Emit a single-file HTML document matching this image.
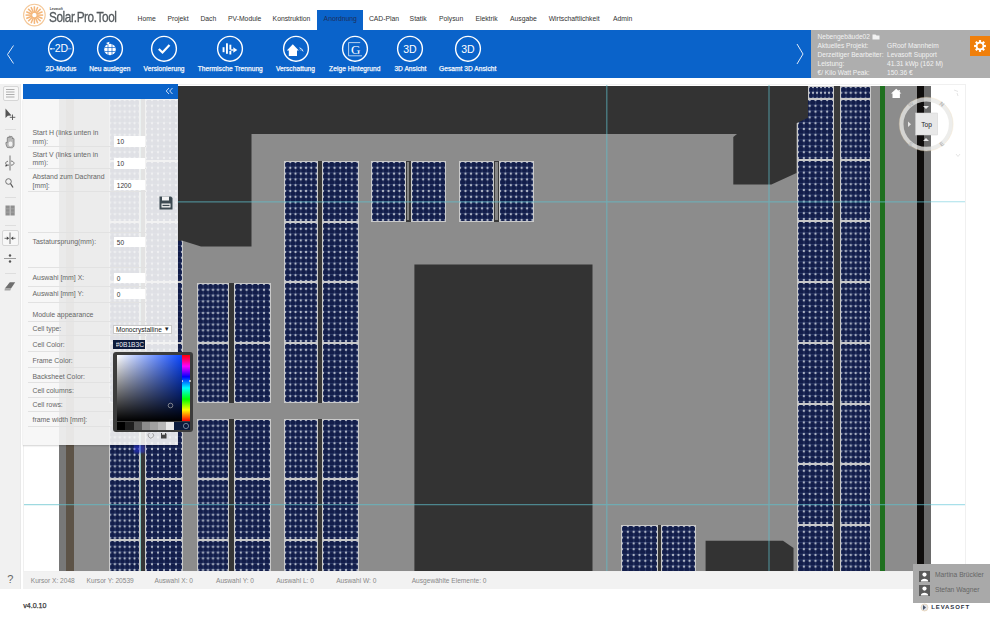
<!DOCTYPE html><html><head><meta charset="utf-8"><style>
*{margin:0;padding:0;box-sizing:border-box}
html,body{width:990px;height:619px;overflow:hidden;background:#fff;font-family:"Liberation Sans",sans-serif;position:relative}
.a{position:absolute}
.t{position:absolute;white-space:nowrap;line-height:1}
.mod{position:absolute;background-color:#121d4a;
 background-image:radial-gradient(circle at center,#bcc2cf 0,#bcc2cf 0.6px,rgba(180,186,200,0.55) 1px,rgba(0,0,0,0) 1.6px),
 linear-gradient(90deg,rgba(90,110,160,0.3) 0.6px,transparent 0.6px),
 linear-gradient(0deg,rgba(90,110,160,0.3) 0.6px,transparent 0.6px);
 background-size:5.4px 5.8px;background-position:-2.2px -2.4px,-0.3px 0,0 -0.3px;
 border:1px solid #c9c9c9;}
.fmod{position:absolute;background-color:#dfe1e6;
 background-image:radial-gradient(circle at center,#f6f6f8 0,#f6f6f8 0.6px,rgba(0,0,0,0) 1.3px);
 background-size:5.4px 5.8px;background-position:-2.2px -2.4px;border:1px solid #eeeeee}
.menu{font-size:6.8px;color:#333;top:16px}
.tbl{font-size:6.6px;color:#f4f7fc;top:65.5px;letter-spacing:0.05px;-webkit-text-stroke:0.25px #f4f7fc}
.lbl{font-size:6.9px;color:#666}
.inp{position:absolute;background:#fff;font-size:6.5px;color:#333;padding-left:3px;padding-top:1px;line-height:10px;height:10.3px;width:31.3px}
.sep{position:absolute;left:28px;width:118px;height:1px;background:#e2e2e2}
.st{font-size:6.6px;color:#888;top:578px}
</style></head><body>
<svg class="a" style="left:0;top:0" width="60" height="30"><circle cx="34.4" cy="15.1" r="10.8" fill="none" stroke="#f5c99a" stroke-width="1.1"/><g stroke="#f4b67a" stroke-width="1.5"><line x1="36.60" y1="15.10" x2="43.20" y2="15.10"/><line x1="36.43" y1="15.94" x2="42.53" y2="18.47"/><line x1="35.96" y1="16.66" x2="40.62" y2="21.32"/><line x1="35.24" y1="17.13" x2="37.77" y2="23.23"/><line x1="34.40" y1="17.30" x2="34.40" y2="23.90"/><line x1="33.56" y1="17.13" x2="31.03" y2="23.23"/><line x1="32.84" y1="16.66" x2="28.18" y2="21.32"/><line x1="32.37" y1="15.94" x2="26.27" y2="18.47"/><line x1="32.20" y1="15.10" x2="25.60" y2="15.10"/><line x1="32.37" y1="14.26" x2="26.27" y2="11.73"/><line x1="32.84" y1="13.54" x2="28.18" y2="8.88"/><line x1="33.56" y1="13.07" x2="31.03" y2="6.97"/><line x1="34.40" y1="12.90" x2="34.40" y2="6.30"/><line x1="35.24" y1="13.07" x2="37.77" y2="6.97"/><line x1="35.96" y1="13.54" x2="40.62" y2="8.88"/><line x1="36.43" y1="14.26" x2="42.53" y2="11.73"/></g><circle cx="34.4" cy="15.1" r="1.6" fill="#fff"/></svg>
<div class="t" style="left:49.7px;top:7.6px;font-size:3.2px;color:#444;font-weight:bold">Levasoft</div>
<div class="t" style="left:48.6px;top:9.6px;font-size:14.8px;color:#555a5e;transform:scaleX(0.8);transform-origin:0 0;letter-spacing:-0.55px;-webkit-text-stroke:0.3px #555a5e">Solar.Pro.Tool</div>
<div class="a" style="left:317px;top:10px;width:45.5px;height:20px;background:#0a63ca"></div>
<div class="t menu" style="left:137.6px;color:#333">Home</div>
<div class="t menu" style="left:167.4px;color:#333">Projekt</div>
<div class="t menu" style="left:200.4px;color:#333">Dach</div>
<div class="t menu" style="left:228px;color:#333">PV-Module</div>
<div class="t menu" style="left:272.6px;color:#333">Konstruktion</div>
<div class="t menu" style="left:323.6px;color:#1d2f5a">Anordnung</div>
<div class="t menu" style="left:368.9px;color:#333">CAD-Plan</div>
<div class="t menu" style="left:409.6px;color:#333">Statik</div>
<div class="t menu" style="left:439px;color:#333">Polysun</div>
<div class="t menu" style="left:475.4px;color:#333">Elektrik</div>
<div class="t menu" style="left:510px;color:#333">Ausgabe</div>
<div class="t menu" style="left:548.7px;color:#333">Wirtschaftlichkeit</div>
<div class="t menu" style="left:613px;color:#333">Admin</div>
<div class="a" style="left:0;top:30px;width:811px;height:47.6px;background:#0a63ca"></div>
<svg class="a" style="left:0;top:30px" width="20" height="48"><polyline points="13.5,15.5 7.5,24.5 13.5,33.5" fill="none" stroke="#dfe9f7" stroke-width="1"/></svg>
<svg class="a" style="left:790px;top:30px" width="20" height="48"><polyline points="7,14 13,24 7,34" fill="none" stroke="#dfe9f7" stroke-width="1"/></svg>
<svg class="a" style="left:45.9px;top:34px" width="30" height="30"><circle cx="15" cy="14.8" r="12.4" fill="none" stroke="#fff" stroke-width="1.4"/><text x="15.5" y="18.3" font-size="10.5" text-anchor="middle" fill="#fff" font-family="Liberation Sans">2D</text><line x1="4.5" y1="14.8" x2="9" y2="14.8" stroke="#fff" stroke-width="0.8"/><circle cx="5" cy="14.8" r="0.9" fill="#fff"/><line x1="22" y1="14.8" x2="25.5" y2="14.8" stroke="#fff" stroke-width="0.6"/></svg>
<div class="t tbl" style="left:60.9px;transform:translateX(-50%)">2D-Modus</div>
<svg class="a" style="left:94.8px;top:34px" width="30" height="30"><circle cx="15" cy="14.8" r="12.4" fill="none" stroke="#fff" stroke-width="1.4"/><circle cx="15" cy="15.5" r="5.8" fill="#fff"/><g stroke="#0a63ca" stroke-width="0.7"><line x1="13" y1="10" x2="13" y2="21"/><line x1="17" y1="10" x2="17" y2="21"/><line x1="9.5" y1="13.5" x2="20.5" y2="13.5"/><line x1="9.5" y1="17.5" x2="20.5" y2="17.5"/></g><path d="M11 9 l3.5 -1.3 l-0.8 3z" fill="#fff"/></svg>
<div class="t tbl" style="left:109.8px;transform:translateX(-50%)">Neu auslegen</div>
<svg class="a" style="left:149.1px;top:34px" width="30" height="30"><circle cx="15" cy="14.8" r="12.4" fill="none" stroke="#fff" stroke-width="1.4"/><polyline points="9.8,15 13.5,18.5 20.5,11" fill="none" stroke="#fff" stroke-width="2.2"/></svg>
<div class="t tbl" style="left:164.1px;transform:translateX(-50%)">Versionierung</div>
<svg class="a" style="left:215.3px;top:34px" width="30" height="30"><circle cx="15" cy="14.8" r="12.4" fill="none" stroke="#fff" stroke-width="1.4"/><g fill="#fff"><rect x="7.6" y="13.2" width="1.9" height="5"/><rect x="11" y="9.3" width="1.9" height="10.5"/><rect x="14.4" y="10.7" width="1.9" height="5"/><rect x="14.4" y="17" width="1.9" height="3.5"/><path d="M18.3 13.2 l4 2.8 l-4 2.8z"/><rect x="15.5" y="15.3" width="3" height="1.4"/></g></svg>
<div class="t tbl" style="left:230.3px;transform:translateX(-50%)">Thermische Trennung</div>
<svg class="a" style="left:280.5px;top:34px" width="30" height="30"><circle cx="15" cy="14.8" r="12.4" fill="none" stroke="#fff" stroke-width="1.4"/><path d="M11.8 10.3 L5.8 16.6 L7.8 16.6 L7.8 22 L16 22 L16 16.6 L17.8 16.6 Z" fill="#fff"/><path d="M18.5 13.8 q2.6 0.6 3.6 3.6" stroke="#fff" stroke-width="0.9" fill="none"/><path d="M19 15.5 l1.2 1.2" stroke="#fff" stroke-width="0.6"/></svg>
<div class="t tbl" style="left:295.5px;transform:translateX(-50%)">Verschattung</div>
<svg class="a" style="left:339.8px;top:34px" width="30" height="30"><circle cx="15" cy="14.8" r="12.4" fill="none" stroke="#fff" stroke-width="1.4"/><path d="M8.6 8.6 H20.2 M8.6 8.6 V21.8 H22" fill="none" stroke="#fff" stroke-width="0.7"/><text x="15.6" y="20.3" font-size="13" text-anchor="middle" fill="#fff" font-family="Liberation Serif">G</text></svg>
<div class="t tbl" style="left:354.8px;transform:translateX(-50%)">Zeige Hintegrund</div>
<svg class="a" style="left:395.4px;top:34px" width="30" height="30"><circle cx="15" cy="14.8" r="12.4" fill="none" stroke="#fff" stroke-width="1.4"/><text x="15" y="18.6" font-size="10.5" text-anchor="middle" fill="#fff" font-family="Liberation Sans">3D</text></svg>
<div class="t tbl" style="left:410.4px;transform:translateX(-50%)">3D Ansicht</div>
<svg class="a" style="left:452.7px;top:34px" width="30" height="30"><circle cx="15" cy="14.8" r="12.4" fill="none" stroke="#fff" stroke-width="1.4"/><text x="15" y="18.6" font-size="10.5" text-anchor="middle" fill="#fff" font-family="Liberation Sans">3D</text></svg>
<div class="t tbl" style="left:467.7px;transform:translateX(-50%)">Gesamt 3D Ansicht</div>
<div class="a" style="left:811px;top:30.3px;width:179px;height:47.5px;background:#aeaeae"></div>
<div class="a" style="left:970px;top:36px;width:20px;height:20px;background:#f07f0a"></div>
<svg class="a" style="left:970px;top:35.7px" width="20" height="20"><g transform="translate(10,10)" fill="#fff"><rect x="-1.1" y="-5.9" width="2.2" height="2.6" transform="rotate(0)"/><rect x="-1.1" y="-5.9" width="2.2" height="2.6" transform="rotate(45)"/><rect x="-1.1" y="-5.9" width="2.2" height="2.6" transform="rotate(90)"/><rect x="-1.1" y="-5.9" width="2.2" height="2.6" transform="rotate(135)"/><rect x="-1.1" y="-5.9" width="2.2" height="2.6" transform="rotate(180)"/><rect x="-1.1" y="-5.9" width="2.2" height="2.6" transform="rotate(225)"/><rect x="-1.1" y="-5.9" width="2.2" height="2.6" transform="rotate(270)"/><rect x="-1.1" y="-5.9" width="2.2" height="2.6" transform="rotate(315)"/><circle r="4.3"/></g><circle cx="10" cy="10" r="2.5" fill="#f07f0a"/></svg>
<div class="t" style="left:817.5px;top:34.1px;font-size:6.6px;color:#f2f2f2">Nebengebäude02</div>
<div class="t" style="left:817.5px;top:43.1px;font-size:6.6px;color:#f2f2f2">Aktuelles Projekt:</div>
<div class="t" style="left:887px;top:43.1px;font-size:6.6px;color:#f2f2f2">GRoof Mannheim</div>
<div class="t" style="left:817.5px;top:51.9px;font-size:6.6px;color:#f2f2f2">Derzeitiger Bearbeiter:</div>
<div class="t" style="left:887px;top:51.9px;font-size:6.6px;color:#f2f2f2">Levasoft Support</div>
<div class="t" style="left:817.5px;top:60.900000000000006px;font-size:6.6px;color:#f2f2f2">Leistung:</div>
<div class="t" style="left:887px;top:60.900000000000006px;font-size:6.6px;color:#f2f2f2">41.31 kWp (162 M)</div>
<div class="t" style="left:817.5px;top:70.4px;font-size:6.6px;color:#f2f2f2">€/ Kilo Watt Peak:</div>
<div class="t" style="left:887px;top:70.4px;font-size:6.6px;color:#f2f2f2">150.36 €</div>
<svg class="a" style="left:872px;top:33px" width="8" height="7"><path d="M0.5 1.5h3l1 1h3v4h-7z" fill="#f2f2f2"/></svg>
<div class="a" style="left:0;top:84px;width:20.5px;height:505px;background:#f1f1f1;border-right:1px solid #e9e9e9"></div>
<div class="a" style="left:2.5px;top:86px;width:16px;height:15px;border:1px solid #d6d6d6;border-radius:2px;background:#f7f7f7"></div>
<svg class="a" style="left:0;top:84px" width="20" height="20"><g stroke="#9a9a9a" stroke-width="0.8"><line x1="6" y1="5.5" x2="14.5" y2="5.5"/><line x1="6" y1="8" x2="14.5" y2="8"/><line x1="6" y1="10.5" x2="14.5" y2="10.5"/><line x1="6" y1="13" x2="14.5" y2="13"/></g></svg>
<svg class="a" style="left:0;top:106px" width="20" height="16"><path d="M5.5 2.5 L5.5 12 L7.8 9.8 L11.5 9.5 Z" fill="#555"/><g stroke="#555" stroke-width="0.9"><line x1="12.5" y1="8.5" x2="12.5" y2="14"/><line x1="9.8" y1="11.3" x2="15.3" y2="11.3"/></g></svg>
<div class="a" style="left:5px;top:128.5px;width:11px;height:1px;background:#dedede"></div>
<div class="a" style="left:5px;top:197px;width:11px;height:1px;background:#dedede"></div>
<div class="a" style="left:5px;top:224.5px;width:11px;height:1px;background:#dedede"></div>
<div class="a" style="left:5px;top:272.5px;width:11px;height:1px;background:#dedede"></div>
<svg class="a" style="left:0;top:134px" width="20" height="16"><path d="M7.3 13.5 C6.3 11.5 5.6 9.8 6 8.3 L7.3 8.5 L7.3 4 C7.3 2.8 9 2.8 9 4 L9 3 C9 1.8 10.7 1.8 10.7 3 L10.7 3.3 C10.7 2.2 12.4 2.2 12.4 3.3 L12.4 5 C12.4 4 14 4 14 5 L14 11 C14 12.7 13 13.8 11.6 13.8 Z" fill="#b8b8b8" stroke="#7a7a7a" stroke-width="0.8"/><ellipse cx="10.5" cy="10" rx="2" ry="2.4" fill="#f2f2f2"/></svg>
<svg class="a" style="left:0;top:154px" width="20" height="18"><line x1="10" y1="1.5" x2="10" y2="16.5" stroke="#666" stroke-width="0.9"/><path d="M11 7 C15 7.5 15 11 11 11.2 M9 11.2 C5 11 4.5 8 8 7.2" fill="none" stroke="#666" stroke-width="0.9"/><path d="M5.5 10.5 l2.5 1 l-2.5 1.3z" fill="#444"/></svg>
<svg class="a" style="left:0;top:176px" width="20" height="16"><circle cx="8.5" cy="5.5" r="2.8" fill="none" stroke="#666" stroke-width="0.9"/><line x1="10.5" y1="7.5" x2="13" y2="11.5" stroke="#555" stroke-width="1.2"/></svg>
<svg class="a" style="left:0;top:204px" width="20" height="14"><rect x="5.5" y="1.5" width="4.3" height="10" fill="#8f8f8f"/><rect x="10.4" y="1.5" width="4.3" height="10" fill="#8f8f8f"/><g stroke="#b5b5b5" stroke-width="0.5"><line x1="5.5" y1="4.8" x2="14.7" y2="4.8"/><line x1="5.5" y1="8.1" x2="14.7" y2="8.1"/></g></svg>
<div class="a" style="left:2.2px;top:230.4px;width:16.8px;height:15.3px;border:1px solid #d6d6d6;border-radius:2px;background:#f7f7f7"></div>
<svg class="a" style="left:0;top:230px" width="20" height="16"><line x1="10" y1="2.5" x2="10" y2="14" stroke="#666" stroke-width="0.9"/><line x1="4.5" y1="8.3" x2="8" y2="8.3" stroke="#555" stroke-width="0.8"/><line x1="12" y1="8.3" x2="15.5" y2="8.3" stroke="#555" stroke-width="0.8"/><path d="M6.8 6.6 l2.4 1.7 l-2.4 1.7z M13.2 6.6 l-2.4 1.7 l2.4 1.7z" fill="#444"/></svg>
<svg class="a" style="left:0;top:250px" width="20" height="16"><line x1="4" y1="8.5" x2="16" y2="8.5" stroke="#888" stroke-width="0.8"/><circle cx="10" cy="5.5" r="1.2" fill="#555"/><circle cx="10" cy="11.5" r="1.2" fill="#555"/></svg>
<svg class="a" style="left:0;top:278px" width="20" height="16"><path d="M4.8 10.5 L9.8 4.3 L15.2 4.3 L11 10.5 Z" fill="#6f6f6f"/><path d="M4.8 10.5 L11 10.5 L10.3 12.6 L4.5 12.6z" fill="#a5a5a5"/></svg>
<div class="t" style="left:7.3px;top:573.5px;font-size:11px;color:#666">?</div>
<div class="a" style="left:23px;top:84px;width:943px;height:488px;background:#fff;border:1px solid #f0f0f0;overflow:hidden">
<div class="a" style="left:-24px;top:-85px;width:990px;height:619px">
<div class="a" style="left:59px;top:86px;width:872px;height:486px;background:#8c8c8c;"></div>
<div class="a" style="left:59px;top:86px;width:7px;height:486px;background:#787878;"></div>
<div class="a" style="left:66px;top:86px;width:8px;height:486px;background:#5d5347;"></div>
<div class="a" style="left:917px;top:86px;width:7px;height:486px;background:#0f0d0c;"></div>
<div class="a" style="left:924px;top:86px;width:7px;height:486px;background:#6a6a6a;"></div>
<div class="a" style="left:880.4px;top:86px;width:4.2px;height:486px;background:#1f701f;"></div>
<div class="a" style="left:140px;top:86px;width:5px;height:486px;background:#363636;"></div>
<div class="a" style="left:140.2px;top:86px;width:1.3px;height:486px;background:#86c0bd;"></div>
<div class="a" style="left:228.5px;top:283px;width:5.5px;height:120px;background:#363636;"></div>
<div class="a" style="left:228.5px;top:418.5px;width:5.5px;height:156.5px;background:#363636;"></div>
<div class="a" style="left:317.5px;top:161px;width:4.5px;height:242px;background:#363636;"></div>
<div class="a" style="left:317.5px;top:418.5px;width:4.5px;height:156.5px;background:#363636;"></div>
<div class="a" style="left:406px;top:161px;width:4.5px;height:60.5px;background:#3a3a3a;"></div>
<div class="a" style="left:407.3px;top:162px;width:2px;height:58px;background:#858585;"></div>
<div class="a" style="left:494px;top:161px;width:5px;height:60.5px;background:#3a3a3a;"></div>
<div class="a" style="left:495.3px;top:162px;width:2.4px;height:58px;background:#858585;"></div>
<div class="a" style="left:834px;top:86px;width:5.5px;height:486px;background:#3a3a3a;"></div>
<div class="a" style="left:658px;top:524.7px;width:3.3px;height:48px;background:#363636;"></div>
<div class="mod" style="left:108.5px;top:99px;width:31.5px;height:61.5px;background-size:4.92px 5.80px;background-position:-2.46px -2.90px,-0.3px 0,0 -0.3px"></div>
<div class="mod" style="left:108.5px;top:160.5px;width:31.5px;height:61.0px;background-size:4.92px 5.80px;background-position:-2.46px -2.90px,-0.3px 0,0 -0.3px"></div>
<div class="mod" style="left:108.5px;top:221.5px;width:31.5px;height:60.5px;background-size:4.92px 5.80px;background-position:-2.46px -2.90px,-0.3px 0,0 -0.3px"></div>
<div class="mod" style="left:108.5px;top:282px;width:31.5px;height:60.5px;background-size:4.92px 5.80px;background-position:-2.46px -2.90px,-0.3px 0,0 -0.3px"></div>
<div class="mod" style="left:108.5px;top:342.5px;width:31.5px;height:60.5px;background-size:4.92px 5.80px;background-position:-2.46px -2.90px,-0.3px 0,0 -0.3px"></div>
<div class="mod" style="left:108.5px;top:418.5px;width:31.5px;height:60.5px;background-size:4.92px 5.80px;background-position:-2.46px -2.90px,-0.3px 0,0 -0.3px"></div>
<div class="mod" style="left:108.5px;top:479px;width:31.5px;height:61px;background-size:4.92px 5.80px;background-position:-2.46px -2.90px,-0.3px 0,0 -0.3px"></div>
<div class="mod" style="left:108.5px;top:540px;width:31.5px;height:35px;background-size:4.92px 5.80px;background-position:-2.46px -2.90px,-0.3px 0,0 -0.3px"></div>
<div class="mod" style="left:145px;top:99px;width:38px;height:61.5px;background-size:6.00px 5.80px;background-position:-3.00px -2.90px,-0.3px 0,0 -0.3px"></div>
<div class="mod" style="left:145px;top:160.5px;width:38px;height:61.0px;background-size:6.00px 5.80px;background-position:-3.00px -2.90px,-0.3px 0,0 -0.3px"></div>
<div class="mod" style="left:145px;top:221.5px;width:38px;height:60.5px;background-size:6.00px 5.80px;background-position:-3.00px -2.90px,-0.3px 0,0 -0.3px"></div>
<div class="mod" style="left:145px;top:282px;width:38px;height:60.5px;background-size:6.00px 5.80px;background-position:-3.00px -2.90px,-0.3px 0,0 -0.3px"></div>
<div class="mod" style="left:145px;top:342.5px;width:38px;height:60.5px;background-size:6.00px 5.80px;background-position:-3.00px -2.90px,-0.3px 0,0 -0.3px"></div>
<div class="mod" style="left:145px;top:418.5px;width:38px;height:60.5px;background-size:6.00px 5.80px;background-position:-3.00px -2.90px,-0.3px 0,0 -0.3px"></div>
<div class="mod" style="left:145px;top:479px;width:38px;height:61px;background-size:6.00px 5.80px;background-position:-3.00px -2.90px,-0.3px 0,0 -0.3px"></div>
<div class="mod" style="left:145px;top:540px;width:38px;height:35px;background-size:6.00px 5.80px;background-position:-3.00px -2.90px,-0.3px 0,0 -0.3px"></div>
<div class="mod" style="left:196.6px;top:283px;width:32px;height:59.5px;background-size:5.00px 5.80px;background-position:-2.50px -2.90px,-0.3px 0,0 -0.3px"></div>
<div class="mod" style="left:196.6px;top:342.5px;width:32px;height:60.5px;background-size:5.00px 5.80px;background-position:-2.50px -2.90px,-0.3px 0,0 -0.3px"></div>
<div class="mod" style="left:196.6px;top:418.5px;width:32px;height:60.5px;background-size:5.00px 5.80px;background-position:-2.50px -2.90px,-0.3px 0,0 -0.3px"></div>
<div class="mod" style="left:196.6px;top:479px;width:32px;height:61px;background-size:5.00px 5.80px;background-position:-2.50px -2.90px,-0.3px 0,0 -0.3px"></div>
<div class="mod" style="left:196.6px;top:540px;width:32px;height:35px;background-size:5.00px 5.80px;background-position:-2.50px -2.90px,-0.3px 0,0 -0.3px"></div>
<div class="mod" style="left:234px;top:283px;width:36.8px;height:59.5px;background-size:5.80px 5.80px;background-position:-2.90px -2.90px,-0.3px 0,0 -0.3px"></div>
<div class="mod" style="left:234px;top:342.5px;width:36.8px;height:60.5px;background-size:5.80px 5.80px;background-position:-2.90px -2.90px,-0.3px 0,0 -0.3px"></div>
<div class="mod" style="left:234px;top:418.5px;width:36.8px;height:60.5px;background-size:5.80px 5.80px;background-position:-2.90px -2.90px,-0.3px 0,0 -0.3px"></div>
<div class="mod" style="left:234px;top:479px;width:36.8px;height:61px;background-size:5.80px 5.80px;background-position:-2.90px -2.90px,-0.3px 0,0 -0.3px"></div>
<div class="mod" style="left:234px;top:540px;width:36.8px;height:35px;background-size:5.80px 5.80px;background-position:-2.90px -2.90px,-0.3px 0,0 -0.3px"></div>
<div class="mod" style="left:284px;top:161px;width:33.5px;height:60.5px;background-size:5.25px 5.80px;background-position:-2.62px -2.90px,-0.3px 0,0 -0.3px"></div>
<div class="mod" style="left:284px;top:221.5px;width:33.5px;height:60.5px;background-size:5.25px 5.80px;background-position:-2.62px -2.90px,-0.3px 0,0 -0.3px"></div>
<div class="mod" style="left:284px;top:282px;width:33.5px;height:60.5px;background-size:5.25px 5.80px;background-position:-2.62px -2.90px,-0.3px 0,0 -0.3px"></div>
<div class="mod" style="left:284px;top:342.5px;width:33.5px;height:60.5px;background-size:5.25px 5.80px;background-position:-2.62px -2.90px,-0.3px 0,0 -0.3px"></div>
<div class="mod" style="left:284px;top:418.5px;width:33.5px;height:60.5px;background-size:5.25px 5.80px;background-position:-2.62px -2.90px,-0.3px 0,0 -0.3px"></div>
<div class="mod" style="left:284px;top:479px;width:33.5px;height:61px;background-size:5.25px 5.80px;background-position:-2.62px -2.90px,-0.3px 0,0 -0.3px"></div>
<div class="mod" style="left:284px;top:540px;width:33.5px;height:35px;background-size:5.25px 5.80px;background-position:-2.62px -2.90px,-0.3px 0,0 -0.3px"></div>
<div class="mod" style="left:322px;top:161px;width:36.5px;height:60.5px;background-size:5.75px 5.80px;background-position:-2.88px -2.90px,-0.3px 0,0 -0.3px"></div>
<div class="mod" style="left:322px;top:221.5px;width:36.5px;height:60.5px;background-size:5.75px 5.80px;background-position:-2.88px -2.90px,-0.3px 0,0 -0.3px"></div>
<div class="mod" style="left:322px;top:282px;width:36.5px;height:60.5px;background-size:5.75px 5.80px;background-position:-2.88px -2.90px,-0.3px 0,0 -0.3px"></div>
<div class="mod" style="left:322px;top:342.5px;width:36.5px;height:60.5px;background-size:5.75px 5.80px;background-position:-2.88px -2.90px,-0.3px 0,0 -0.3px"></div>
<div class="mod" style="left:322px;top:418.5px;width:36.5px;height:60.5px;background-size:5.75px 5.80px;background-position:-2.88px -2.90px,-0.3px 0,0 -0.3px"></div>
<div class="mod" style="left:322px;top:479px;width:36.5px;height:61px;background-size:5.75px 5.80px;background-position:-2.88px -2.90px,-0.3px 0,0 -0.3px"></div>
<div class="mod" style="left:322px;top:540px;width:36.5px;height:35px;background-size:5.75px 5.80px;background-position:-2.88px -2.90px,-0.3px 0,0 -0.3px"></div>
<div class="mod" style="left:371px;top:161px;width:35px;height:60.5px;background-size:5.50px 5.80px;background-position:-2.75px -2.90px,-0.3px 0,0 -0.3px"></div>
<div class="mod" style="left:410.5px;top:161px;width:35.5px;height:60.5px;background-size:5.58px 5.80px;background-position:-2.79px -2.90px,-0.3px 0,0 -0.3px"></div>
<div class="mod" style="left:459px;top:161px;width:35px;height:60.5px;background-size:5.50px 5.80px;background-position:-2.75px -2.90px,-0.3px 0,0 -0.3px"></div>
<div class="mod" style="left:499px;top:161px;width:34.5px;height:60.5px;background-size:5.42px 5.80px;background-position:-2.71px -2.90px,-0.3px 0,0 -0.3px"></div>
<div class="mod" style="left:621px;top:524.7px;width:37px;height:50.299999999999955px;background-size:5.83px 5.80px;background-position:-2.92px -2.90px,-0.3px 0,0 -0.3px"></div>
<div class="mod" style="left:661px;top:524.7px;width:35px;height:50.299999999999955px;background-size:5.50px 5.80px;background-position:-2.75px -2.90px,-0.3px 0,0 -0.3px"></div>
<div class="mod" style="left:797px;top:160.4px;width:37px;height:60.29999999999998px;background-size:5.83px 5.80px;background-position:-2.92px -2.90px,-0.3px 0,0 -0.3px"></div>
<div class="mod" style="left:797px;top:220.7px;width:37px;height:61.30000000000001px;background-size:5.83px 5.80px;background-position:-2.92px -2.90px,-0.3px 0,0 -0.3px"></div>
<div class="mod" style="left:797px;top:282px;width:37px;height:60.69999999999999px;background-size:5.83px 5.80px;background-position:-2.92px -2.90px,-0.3px 0,0 -0.3px"></div>
<div class="mod" style="left:797px;top:342.7px;width:37px;height:61.30000000000001px;background-size:5.83px 5.80px;background-position:-2.92px -2.90px,-0.3px 0,0 -0.3px"></div>
<div class="mod" style="left:797px;top:404px;width:37px;height:60.30000000000001px;background-size:5.83px 5.80px;background-position:-2.92px -2.90px,-0.3px 0,0 -0.3px"></div>
<div class="mod" style="left:797px;top:464.3px;width:37px;height:60.49999999999994px;background-size:5.83px 5.80px;background-position:-2.92px -2.90px,-0.3px 0,0 -0.3px"></div>
<div class="mod" style="left:797px;top:524.8px;width:37px;height:60.5px;background-size:5.83px 5.80px;background-position:-2.92px -2.90px,-0.3px 0,0 -0.3px"></div>
<div class="mod" style="left:808px;top:86px;width:26px;height:13.400000000000006px;background-size:4.00px 5.80px;background-position:-2.00px -2.90px,-0.3px 0,0 -0.3px"></div>
<div class="mod" style="left:797px;top:99.4px;width:37px;height:61.0px;background-size:5.83px 5.80px;background-position:-2.92px -2.90px,-0.3px 0,0 -0.3px"></div>
<div class="mod" style="left:839.5px;top:86px;width:31.5px;height:13.400000000000006px;background-size:4.92px 5.80px;background-position:-2.46px -2.90px,-0.3px 0,0 -0.3px"></div>
<div class="mod" style="left:839.5px;top:99.4px;width:31.5px;height:61.0px;background-size:4.92px 5.80px;background-position:-2.46px -2.90px,-0.3px 0,0 -0.3px"></div>
<div class="mod" style="left:839.5px;top:160.4px;width:31.5px;height:60.29999999999998px;background-size:4.92px 5.80px;background-position:-2.46px -2.90px,-0.3px 0,0 -0.3px"></div>
<div class="mod" style="left:839.5px;top:220.7px;width:31.5px;height:61.30000000000001px;background-size:4.92px 5.80px;background-position:-2.46px -2.90px,-0.3px 0,0 -0.3px"></div>
<div class="mod" style="left:839.5px;top:282px;width:31.5px;height:60.69999999999999px;background-size:4.92px 5.80px;background-position:-2.46px -2.90px,-0.3px 0,0 -0.3px"></div>
<div class="mod" style="left:839.5px;top:342.7px;width:31.5px;height:61.30000000000001px;background-size:4.92px 5.80px;background-position:-2.46px -2.90px,-0.3px 0,0 -0.3px"></div>
<div class="mod" style="left:839.5px;top:404px;width:31.5px;height:60.30000000000001px;background-size:4.92px 5.80px;background-position:-2.46px -2.90px,-0.3px 0,0 -0.3px"></div>
<div class="mod" style="left:839.5px;top:464.3px;width:31.5px;height:60.49999999999994px;background-size:4.92px 5.80px;background-position:-2.46px -2.90px,-0.3px 0,0 -0.3px"></div>
<div class="mod" style="left:839.5px;top:524.8px;width:31.5px;height:60.5px;background-size:4.92px 5.80px;background-position:-2.46px -2.90px,-0.3px 0,0 -0.3px"></div>
<svg class="a" style="left:0;top:0" width="990" height="619"><g fill="#333333"><polygon points="178,86 808,86 808,117.7 796.5,123.3 796.5,173 771.4,184.6 733.3,184.6 733.3,137 737,133.9 251.5,133.9 251.5,246.6 201,246.6 182.6,240.8 178,240.8"/><polygon points="414.4,264.4 592.5,264.4 592.5,575 414.4,575"/><polygon points="705.6,540.7 783,540.7 793.5,548 793.5,575 705.6,575"/></g><g stroke="#5fc0cc" stroke-width="1.2" opacity="0.6"><line x1="178" y1="201.8" x2="990" y2="201.8"/><line x1="23" y1="504.6" x2="990" y2="504.6"/><line x1="606.8" y1="0" x2="606.8" y2="619"/><line x1="769" y1="0" x2="769" y2="619"/></g></svg>
<div class="a" style="left:931px;top:86px;width:40px;height:486px;background:#ffffff;"></div>
<svg class="a" style="left:0;top:0" width="990" height="619"><line x1="931" y1="201.8" x2="966" y2="201.8" stroke="#a8e0ea" stroke-width="1.1"/><line x1="931" y1="504.6" x2="966" y2="504.6" stroke="#a8e0ea" stroke-width="1.1"/></svg>
<svg class="a" style="left:880px;top:84px" width="90" height="90"><circle cx="46.2" cy="40.1" r="24.8" fill="none" stroke="rgba(232,232,230,0.78)" stroke-width="4.2"/><circle cx="46.2" cy="40.1" r="27" fill="none" stroke="rgba(240,205,150,0.35)" stroke-width="0.6"/><rect x="35.6" y="29" width="22.1" height="22" fill="#e8e8e8" stroke="#d4d4d4" stroke-width="0.5"/><text x="46.6" y="42.6" font-size="6.6" text-anchor="middle" fill="#222" font-family="Liberation Sans">Top</text><path d="M43 22 l3 3 l3 -3z M43 57 l3 -3 l3 3z M28 37.5 l3 2.7 l-3 2.7z" fill="#e6e6e6"/><path d="M11 9.5 l5.2 -4.8 l5.2 4.8 h-1.5 v4.5 h-7.4 v-4.5z M18.5 6 h1.3 v2 l-1.3 -1.2z" fill="#fff"/><g font-size="5.8" fill="#b8b8b8" font-family="Liberation Sans" font-weight="bold"><text x="61.8" y="22.2" text-anchor="middle" transform="rotate(38 61.8 20.2)">N</text><text x="30.6" y="22.2" text-anchor="middle" transform="rotate(-38 30.6 20.2)">W</text><text x="30.6" y="62.0" text-anchor="middle" transform="rotate(38 30.6 60.0)">S</text><text x="61.8" y="62.0" text-anchor="middle" transform="rotate(-38 61.8 60.0)">E</text></g><path d="M74 6 l4 1.5 M77 9 l1 3" stroke="#ddd" stroke-width="0.8"/><path d="M76 70 l2 2.5 l2 -2.5" stroke="#ddd" stroke-width="0.8" fill="none"/></svg>
</div></div>
<div class="a" style="left:133.7px;top:444px;width:11.6px;height:9px;background:rgba(40,50,220,0.55);filter:blur(1px)"></div>
<div class="a" style="left:23px;top:83.5px;width:155px;height:15.3px;background:#0a63ca"></div>
<svg class="a" style="left:164px;top:86px" width="12" height="10"><polyline points="5,2 2.2,5 5,8" fill="none" stroke="#dfe9f7" stroke-width="0.9"/><polyline points="8.5,2 5.7,5 8.5,8" fill="none" stroke="#dfe9f7" stroke-width="0.9"/></svg>
<div class="a" style="left:23px;top:99px;width:155px;height:346px;background:rgba(246,246,246,0.9);box-shadow:0 1px 1.5px rgba(0,0,0,0.18)"></div>
<div class="t lbl" style="left:32.5px;top:129.5px">Start H (links unten in</div>
<div class="t lbl" style="left:32.5px;top:138.5px">mm):</div>
<div class="t lbl" style="left:32.5px;top:152.0px">Start V (links unten in</div>
<div class="t lbl" style="left:32.5px;top:160.29999999999998px">mm):</div>
<div class="t lbl" style="left:32.5px;top:174.1px">Abstand zum Dachrand</div>
<div class="t lbl" style="left:32.5px;top:182.7px">[mm]:</div>
<div class="t lbl" style="left:32.5px;top:238.7px">Tastatursprung(mm):</div>
<div class="t lbl" style="left:32.5px;top:275.2px">Auswahl [mm] X:</div>
<div class="t lbl" style="left:32.5px;top:290.7px">Auswahl [mm] Y:</div>
<div class="t lbl" style="left:32.5px;top:312.3px">Module appearance</div>
<div class="t lbl" style="left:32.5px;top:326.2px">Cell type:</div>
<div class="t lbl" style="left:32.5px;top:342.0px">Cell Color:</div>
<div class="t lbl" style="left:32.5px;top:358.2px">Frame Color:</div>
<div class="t lbl" style="left:32.5px;top:374.0px">Backsheet Color:</div>
<div class="t lbl" style="left:32.5px;top:387.9px">Cell columns:</div>
<div class="t lbl" style="left:32.5px;top:401.7px">Cell rows:</div>
<div class="t lbl" style="left:32.5px;top:417.3px">frame width [mm]:</div>
<div class="sep" style="top:146.3px"></div>
<div class="sep" style="top:168px"></div>
<div class="sep" style="top:191.4px"></div>
<div class="sep" style="top:231.5px"></div>
<div class="sep" style="top:266.8px"></div>
<div class="sep" style="top:285.5px"></div>
<div class="sep" style="top:301.7px"></div>
<div class="sep" style="top:321px"></div>
<div class="sep" style="top:334.6px"></div>
<div class="sep" style="top:350.8px"></div>
<div class="sep" style="top:367px"></div>
<div class="sep" style="top:382.4px"></div>
<div class="sep" style="top:397px"></div>
<div class="sep" style="top:410.8px"></div>
<div class="sep" style="top:426px"></div>
<div class="inp" style="left:113.8px;top:136.3px">10</div>
<div class="inp" style="left:113.8px;top:158.3px">10</div>
<div class="inp" style="left:113.8px;top:180px">1200</div>
<div class="inp" style="left:113.8px;top:236.5px">50</div>
<div class="inp" style="left:113.8px;top:272.6px">0</div>
<div class="inp" style="left:113.8px;top:288.8px">0</div>
<svg class="a" style="left:159px;top:196px" width="15" height="14"><path d="M0.5 0.5 H12 L13.5 2 V13.5 H0.5 Z" fill="#3d4a52"/><rect x="3" y="0.5" width="7" height="4" fill="#f4f4f4"/><rect x="2.5" y="7.5" width="9" height="4" fill="#f4f4f4"/><rect x="3.5" y="8.8" width="7" height="1.3" fill="#3d4a52"/></svg>
<div class="a" style="left:113.4px;top:325px;width:58.8px;height:9px;background:#fff;border:1px solid #c9c9c9"></div>
<div class="t" style="left:116px;top:326.5px;font-size:6.6px;color:#222">Monocrystalline <span style="font-size:6px;position:relative;top:-0.3px">▼</span></div>
<div class="a" style="left:113.4px;top:340.4px;width:31.6px;height:9.1px;background:#0b1b3c"></div>
<div class="t" style="left:115.5px;top:341.8px;font-size:6.7px;color:#e8ecf4;width:28.5px;overflow:hidden">#0B1B3C</div>
<div class="a" style="left:112.8px;top:351.7px;width:80.4px;height:80.8px;background:#3c3c3c;border-radius:3px"></div>
<div class="a" style="left:117.3px;top:355px;width:65px;height:65.5px;background:linear-gradient(to top,#000,rgba(0,0,0,0)),linear-gradient(to right,#fff,#0b47ff)"></div>
<div class="a" style="left:182.3px;top:355px;width:8px;height:65.5px;background:linear-gradient(to bottom,#f00 0%,#f0f 17%,#00f 33%,#0ff 50%,#0f0 67%,#ff0 83%,#f00 100%)"></div>
<svg class="a" style="left:165px;top:400px" width="12" height="12"><circle cx="5.5" cy="5.5" r="2.3" fill="none" stroke="#aaa" stroke-width="0.7"/></svg>
<div class="a" style="left:181.6px;top:380.2px;width:1.6px;height:1.6px;background:#ddd;border-radius:1px"></div><div class="a" style="left:189.4px;top:380.2px;width:1.6px;height:1.6px;background:#ddd;border-radius:1px"></div>
<div class="a" style="left:117.30px;top:421.8px;width:8.14px;height:8.2px;background:#000"></div>
<div class="a" style="left:125.44px;top:421.8px;width:8.14px;height:8.2px;background:#1e1e1e"></div>
<div class="a" style="left:133.58px;top:421.8px;width:8.14px;height:8.2px;background:#555"></div>
<div class="a" style="left:141.72px;top:421.8px;width:8.14px;height:8.2px;background:#8c8c8c"></div>
<div class="a" style="left:149.86px;top:421.8px;width:8.14px;height:8.2px;background:#a0a0a0"></div>
<div class="a" style="left:158.00px;top:421.8px;width:8.14px;height:8.2px;background:#b6b6b6"></div>
<div class="a" style="left:166.14px;top:421.8px;width:8.14px;height:8.2px;background:#e8e8e8"></div>
<div class="a" style="left:174.3px;top:421.8px;width:16px;height:8.2px;background:#0b1b3c"></div>
<svg class="a" style="left:181px;top:421px" width="10" height="10"><circle cx="5" cy="5" r="2.6" fill="none" stroke="#9ab" stroke-width="0.7"/></svg>
<svg class="a" style="left:146px;top:431px" width="22" height="9"><path d="M3.5 2 A2.7 2.7 0 1 0 6.5 2.2" fill="none" stroke="#999" stroke-width="0.9"/><path d="M15 2 h4.5 l1 1 v4.5 h-5.5z" fill="#444"/><rect x="16" y="2" width="3" height="1.7" fill="#ddd"/></svg>
<div class="a" style="left:23px;top:572px;width:967px;height:17px;background:#f2f2f2"></div>
<div class="t st" style="left:30.8px">Kursor X: 2048</div>
<div class="t st" style="left:86.6px">Kursor Y: 20539</div>
<div class="t st" style="left:154.5px">Auswahl X: 0</div>
<div class="t st" style="left:216px">Auswahl Y: 0</div>
<div class="t st" style="left:276.2px">Auswahl L: 0</div>
<div class="t st" style="left:336.2px">Auswahl W: 0</div>
<div class="t st" style="left:411.7px">Ausgewählte Elemente: 0</div>
<div class="t" style="left:23.2px;top:603.2px;font-size:7.1px;color:#3a3a3a;letter-spacing:0px;-webkit-text-stroke:0.25px #3a3a3a">v4.0.10</div>
<div class="a" style="left:913px;top:564.3px;width:77px;height:38.5px;background:#a9a9a9"></div>
<svg class="a" style="left:919px;top:570.5px" width="11" height="11"><rect width="11" height="11" fill="#5a5a5a"/><circle cx="5.5" cy="3.6" r="2.1" fill="#fff"/><path d="M1.8 10.5 C1.8 6.8 9.2 6.8 9.2 10.5z" fill="#fff"/></svg>
<div class="t" style="left:935px;top:572.4px;font-size:6.7px;color:#666;letter-spacing:0px">Martina Brückler</div>
<svg class="a" style="left:919px;top:585.0px" width="11" height="11"><rect width="11" height="11" fill="#5a5a5a"/><circle cx="5.5" cy="3.6" r="2.1" fill="#fff"/><path d="M1.8 10.5 C1.8 6.8 9.2 6.8 9.2 10.5z" fill="#fff"/></svg>
<div class="t" style="left:935px;top:586.9px;font-size:6.7px;color:#666;letter-spacing:0px">Stefan Wagner</div>
<svg class="a" style="left:920px;top:602.5px" width="9" height="9"><circle cx="4.5" cy="4.5" r="3.5" fill="#dfe3ea" stroke="#e8c9a0" stroke-width="0.6"/><path d="M3 2 l3 2.5 l-3 2.5z" fill="#4a5568"/></svg>
<div class="t" style="left:931.2px;top:604px;font-size:6px;color:#2b3142;font-weight:bold;letter-spacing:0.9px">LEVASOFT</div>
</body></html>
